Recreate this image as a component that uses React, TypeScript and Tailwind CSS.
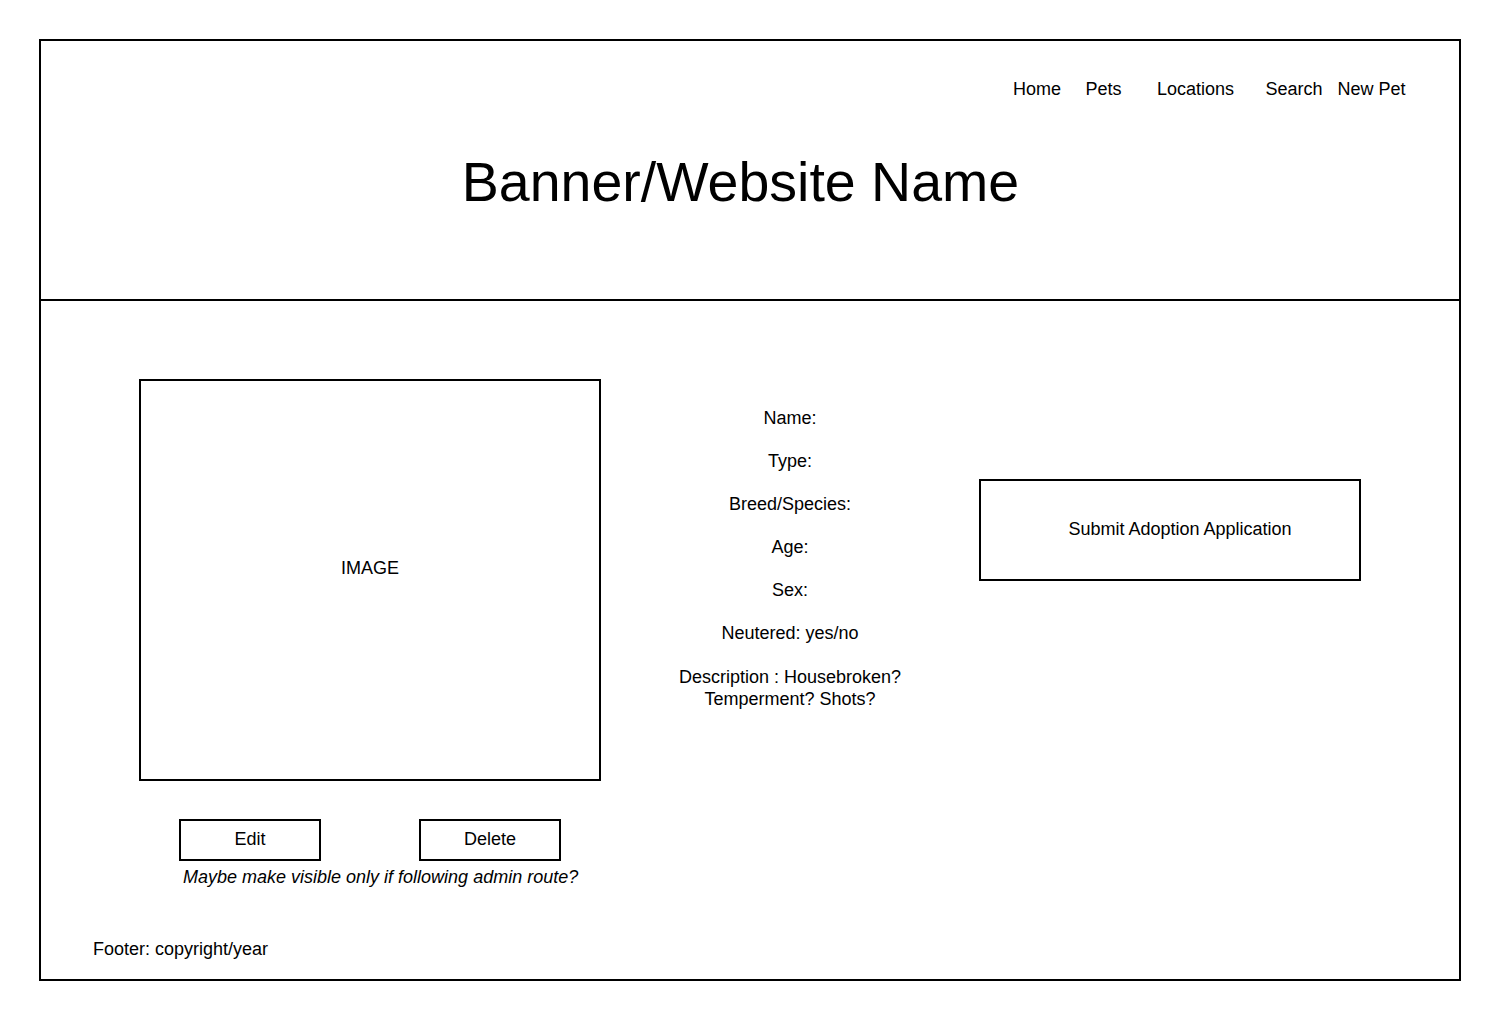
const navItems = [
  { label: "Home", width: "w-[60px]" },
  { label: "Pets", width: "w-[73px]" },
  { label: "Locations", width: "w-[111px]" },
  { label: "Search", width: "w-[86px]" },
  { label: "New Pet", width: "w-[69px]" },
];

const details = ["Name:", "Type:", "Breed/Species:", "Age:", "Sex:", "Neutered: yes/no"];

export default function App() {
  return (
    <div
      className="min-h-screen bg-white pt-[39px] pl-[39px] text-black"
      style={{ fontFamily: '"Liberation Sans", Arial, sans-serif' }}
    >
      <div className="flex h-[942px] w-[1422px] flex-col border-2 border-black">
        {/* Header */}
        <header className="flex h-[260px] shrink-0 flex-col border-b-2 border-black">
          <nav className="flex pl-[966px] pt-[38px] text-[18px] leading-[20px]">
            {navItems.map((item) => (
              <span key={item.label} className={`${item.width} text-center whitespace-nowrap`}>
                {item.label}
              </span>
            ))}
          </nav>
          <h1 className="mt-[56px] pr-[19px] text-center text-[55.5px] leading-none font-normal whitespace-nowrap">
            Banner/Website Name
          </h1>
        </header>

        {/* Body */}
        <main className="flex flex-1 flex-col text-[18px] leading-[20px]">
          <div className="flex items-start">
            {/* Image + admin buttons */}
            <div className="ml-[98px] mt-[78px] flex w-[462px] flex-col">
              <div className="flex h-[402px] w-[462px] items-center justify-center border-2 border-black pb-[24px]">
                IMAGE
              </div>
              <div className="mt-[38px] flex">
                <button className="ml-[40px] flex h-[42px] w-[142px] items-center justify-center border-2 border-black pb-[2px]">
                  Edit
                </button>
                <button className="ml-[98px] flex h-[42px] w-[142px] items-center justify-center border-2 border-black pb-[2px]">
                  Delete
                </button>
              </div>
              <p className="mt-[6px] pl-[44px] italic whitespace-nowrap">
                Maybe make visible only if following admin route?
              </p>
            </div>

            {/* Pet details */}
            <div className="ml-[29px] mt-[107px] flex w-[320px] flex-col items-center gap-[23px] text-center">
              {details.map((d) => (
                <span key={d} className="whitespace-nowrap">
                  {d}
                </span>
              ))}
              <span className="leading-[22px] whitespace-nowrap">
                Description : Housebroken?
                <br />
                Temperment? Shots?
              </span>
            </div>

            {/* Adoption */}
            <button className="ml-[29px] mt-[178px] flex h-[102px] w-[382px] items-center justify-center border-2 border-black pl-[20px] pb-[2px]">
              Submit Adoption Application
            </button>
          </div>

          <footer className="mt-auto pb-[20px] pl-[52px]">Footer: copyright/year</footer>
        </main>
      </div>
    </div>
  );
}
